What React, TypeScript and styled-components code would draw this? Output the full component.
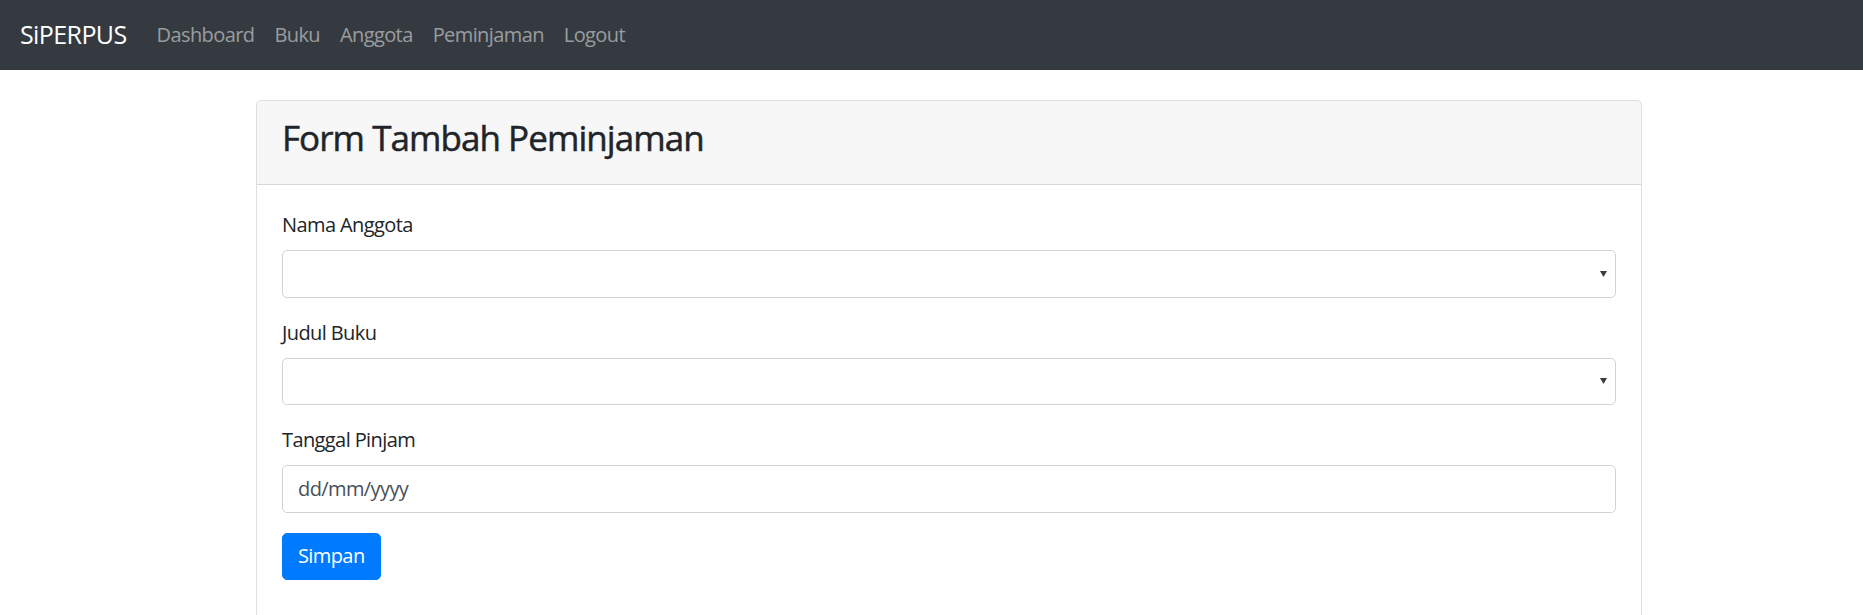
import React from "react";
import styled, { createGlobalStyle } from "styled-components";

const FONT = `"Open Sans", "Noto Sans", "Liberation Sans", sans-serif`;
const TRACK = "-0.03em";

const GlobalStyle = createGlobalStyle`
  * { box-sizing: border-box; }
  body {
    margin: 0;
    font-family: ${FONT};
    font-size: 20px;
    line-height: 1.5;
    letter-spacing: ${TRACK};
    color: #212529;
    background: #fff;
  }
`;

const Navbar = styled.nav`
  height: 70px;
  background: #343a40;
  display: flex;
  align-items: center;
  padding: 0 20px;
`;

const Brand = styled.a`
  font-size: 25px;
  line-height: 37.5px;
  color: #fff;
  margin-right: 20px;
  text-decoration: none;
`;

const NavList = styled.div`
  display: flex;
  align-items: center;
`;

const NavLink = styled.a`
  font-size: 20px;
  line-height: 30px;
  padding: 10px;
  color: rgba(255, 255, 255, 0.5);
  text-decoration: none;
`;

const Main = styled.main`
  padding: 30px 0 0 256px;
`;

const Card = styled.section`
  width: 1386px;
  border: 1px solid rgba(0, 0, 0, 0.125);
  border-radius: 5px;
  background: #fff;
  overflow: hidden;
`;

const CardHeader = styled.header`
  background: rgba(0, 0, 0, 0.03);
  border-bottom: 1px solid rgba(0, 0, 0, 0.125);
  padding: 15px 25px;
`;

const Title = styled.h3`
  margin: 0 0 10px;
  font-size: 35px;
  line-height: 43px;
  font-weight: 500;
  letter-spacing: -0.027em;
  -webkit-text-stroke: 0.5px #212529;
  color: #212529;
`;

const CardBody = styled.div`
  padding: 25px 25px 60px;
`;

const FormGroup = styled.div`
  margin-bottom: 20px;
`;

const Label = styled.label`
  display: block;
  font-size: 20px;
  line-height: 30px;
  margin-bottom: 10px;
  color: #212529;
`;

const SelectWrap = styled.div`
  position: relative;
`;

const controlCss = `
  display: block;
  width: 100%;
  height: 47.5px;
  padding: 7.5px 15px;
  font-family: ${FONT};
  font-size: 20px;
  line-height: 30px;
  letter-spacing: ${TRACK};
  color: #495057;
  background: #fff;
  border: 1px solid #ced4da;
  border-radius: 5px;
  outline: none;
`;

const Select = styled.select`
  ${controlCss}
  appearance: none;
  -webkit-appearance: none;
`;

const Arrow = styled.svg`
  position: absolute;
  right: 9px;
  top: 50%;
  margin-top: -3px;
  width: 7px;
  height: 6px;
  pointer-events: none;
`;

const Input = styled.input`
  ${controlCss}
  &::placeholder {
    color: #495057;
    opacity: 1;
  }
`;

const Button = styled.button`
  display: inline-block;
  font-family: ${FONT};
  font-size: 20px;
  line-height: 30px;
  letter-spacing: ${TRACK};
  padding: 7.5px 15px;
  color: #fff;
  background: #007bff;
  border: 1px solid #007bff;
  border-radius: 5px;
  cursor: pointer;
`;

function SelectField({ label, id }: { label: string; id: string }) {
  return (
    <FormGroup>
      <Label htmlFor={id}>{label}</Label>
      <SelectWrap>
        <Select id={id} defaultValue="">
          <option value=""></option>
        </Select>
        <Arrow viewBox="0 0 7 6">
          <polygon points="0,0 7,0 3.5,6" fill="#3c3c3c" />
        </Arrow>
      </SelectWrap>
    </FormGroup>
  );
}

export default function App() {
  return (
    <>
      <GlobalStyle />
      <Navbar>
        <Brand href="#">SiPERPUS</Brand>
        <NavList>
          <NavLink href="#">Dashboard</NavLink>
          <NavLink href="#">Buku</NavLink>
          <NavLink href="#">Anggota</NavLink>
          <NavLink href="#">Peminjaman</NavLink>
          <NavLink href="#">Logout</NavLink>
        </NavList>
      </Navbar>
      <Main>
        <Card>
          <CardHeader>
            <Title>Form Tambah Peminjaman</Title>
          </CardHeader>
          <CardBody>
            <form onSubmit={(e) => e.preventDefault()}>
              <SelectField label="Nama Anggota" id="anggota" />
              <SelectField label="Judul Buku" id="buku" />
              <FormGroup>
                <Label htmlFor="tanggal">Tanggal Pinjam</Label>
                <Input id="tanggal" type="text" placeholder="dd/mm/yyyy" />
              </FormGroup>
              <Button type="submit">Simpan</Button>
            </form>
          </CardBody>
        </Card>
      </Main>
    </>
  );
}
